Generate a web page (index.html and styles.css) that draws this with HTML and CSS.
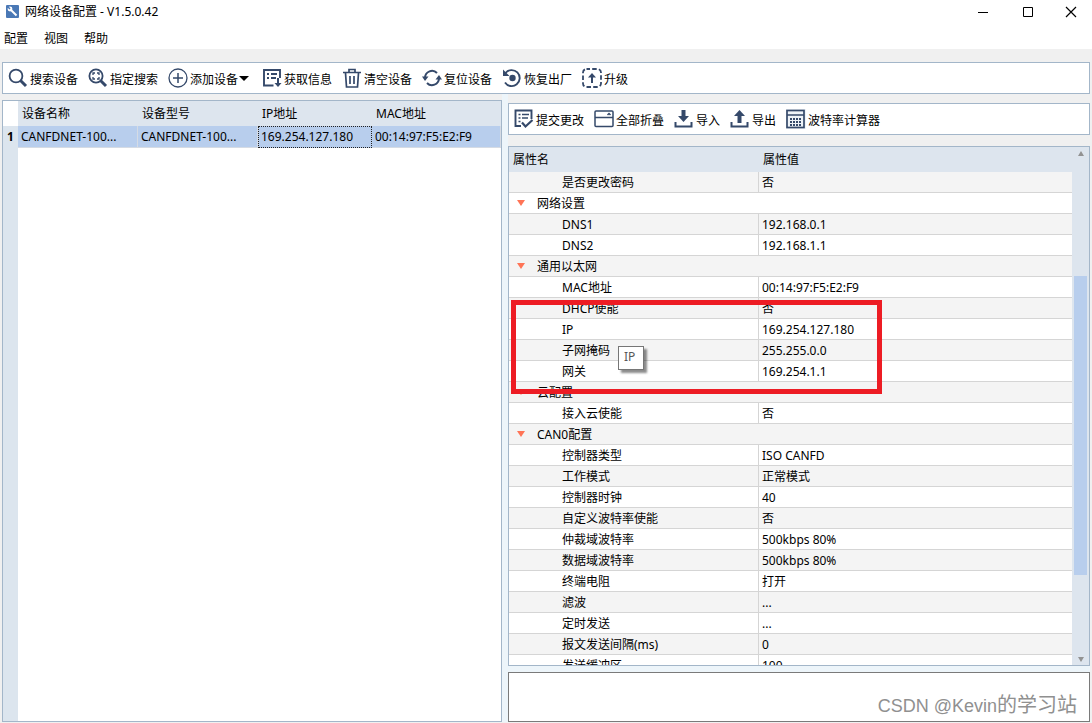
FILE: index.html
```html
<!DOCTYPE html>
<html lang="zh-CN">
<head>
<meta charset="utf-8">
<title>网络设备配置 - V1.5.0.42</title>
<link rel="stylesheet" href="styles.css">
</head>
<body>
<div class="window">
  <header class="titlebar">
    <svg class="app-icon" viewBox="0 0 13 13"><rect width="13" height="13" rx="1" fill="#4a78b5"/><path d="M5 5l5.500 5.500" stroke="#fff" stroke-width="2"/><circle cx="4" cy="4" r="2.400" fill="#fff"/><path d="M1 1l3 3" stroke="#4a78b5" stroke-width="1.600"/></svg>
    <h1 class="title">网络设备配置 - V1.5.0.42</h1>
    <div class="window-controls">
      <button type="button" aria-label="最小化"><svg viewBox="0 0 12 12"><path d="M1 6.500h10" stroke="#000"/></svg></button>
      <button type="button" aria-label="最大化"><svg viewBox="0 0 12 12"><path d="M1.500 1.500h9v9h-9z" fill="none" stroke="#000"/></svg></button>
      <button type="button" aria-label="关闭"><svg viewBox="0 0 12 12"><path d="M1 1l10 10M11 1L1 11" stroke="#000" stroke-width="1.200"/></svg></button>
    </div>
  </header>
  <nav class="menubar">
    <button type="button">配置</button>
    <button type="button">视图</button>
    <button type="button">帮助</button>
  </nav>

  <div class="toolbar main-toolbar">
    <button type="button"><svg class="icon" viewBox="0 0 20 20"><circle cx="8" cy="8" r="6.400" stroke-width="1.800"/><path d="M12.500 12.500l5.500 5.500" stroke-width="3"/></svg><span>搜索设备</span></button>
    <button type="button"><svg class="icon" viewBox="0 0 20 20"><circle cx="8" cy="8" r="6.600" stroke-width="1.800"/><path d="M12.500 12.500l5.500 5.500" stroke-width="3"/><path d="M5 7V5h2M9 5h2v2M11 9v2H9M7 11H5V9" stroke-width="1.300"/></svg><span>指定搜索</span></button>
    <button type="button"><svg class="icon" viewBox="0 0 20 20"><circle cx="10" cy="10" r="9" stroke-width="1.300"/><path d="M10 5v10M5 10h10" stroke-width="1.500"/></svg><span>添加设备</span><svg class="caret" viewBox="0 0 14 10"><path d="M1 3h10L6 8z" fill="#000"/></svg></button>
    <button type="button"><svg class="icon" viewBox="0 0 20 20"><path d="M11.500 17.500H2V2h16v8" stroke-width="1.900"/><path d="M5 6h2M9 6h6M5 10h2M9 10h5" stroke-width="1.800"/><path d="M16 10v7" stroke-width="2"/><path class="solid" d="M12.500 15h7L16 19z"/></svg><span>获取信息</span></button>
    <button type="button"><svg class="icon" viewBox="0 0 20 20"><path d="M1 4.500h18M7 4V1.500h6V4" stroke-width="1.700"/><path d="M3.500 5l1 14h11l1-14M8 8v8M12 8v8" stroke-width="1.700"/></svg><span>清空设备</span></button>
    <button type="button"><svg class="icon" viewBox="0 0 20 20"><path d="M3 9.500a7 7 0 0 1 12-4.500M17 10.500a7 7 0 0 1-12 4.500" stroke-width="2"/><path class="solid" d="M0 8.500h6.500L3 13zM13.500 11.500H20L17 7z"/></svg><span>复位设备</span></button>
    <button type="button"><svg class="icon" viewBox="0 0 20 20"><path d="M3.500 5a8 8 0 1 1-.5 9.500" stroke-width="1.900"/><circle class="solid" cx="10.500" cy="10" r="3.200"/><path class="solid" d="M1 1.500V8h6.500z"/></svg><span>恢复出厂</span></button>
    <button type="button"><svg class="icon" viewBox="0 0 20 20"><rect class="ink" x="1" y="1" width="18" height="18" rx="3.500" stroke-width="1.800" stroke-dasharray="4.500 2.200" stroke-dashoffset="1"/><path d="M10 8v7" stroke-width="2"/><path class="solid" d="M6 9.500L10 5l4 4.500z"/></svg><span>升级</span></button>
  </div>

  <main class="workspace">
    <section class="devices">
      <table class="device-table">
        <colgroup><col class="c-index"><col class="c-name"><col class="c-model"><col class="c-ip"><col class="c-mac"></colgroup>
        <thead><tr><td></td><th>设备名称</th><th>设备型号</th><th>IP地址</th><th>MAC地址</th></tr></thead>
        <tbody>
          <tr><th>1</th><td>CANFDNET-100...</td><td>CANFDNET-100...</td><td class="current">169.254.127.180</td><td>00:14:97:F5:E2:F9</td></tr>
        </tbody>
      </table>
    </section>

    <section class="details">
      <div class="toolbar-area">
        <div class="toolbar">
          <button type="button"><svg class="icon" viewBox="0 0 20 20"><path d="M7 17H1.500V1.500h16V10" stroke-width="1.900"/><path d="M4.500 5.500h2M8 5.500h7M4.500 9h2M8 9h6M4.500 12.500h2" stroke-width="1.600"/><path d="M8 13.500l3.500 4L18.500 11" stroke-width="2.200"/></svg><span>提交更改</span></button>
          <button type="button"><svg class="icon" viewBox="0 0 20 20"><rect class="ink" x="1" y="2" width="18" height="15.500" rx="1" stroke-width="1.500"/><path d="M1 8.500h18M13.500 6l1.500-1.500L16.500 6" stroke-width="1.500"/></svg><span>全部折叠</span></button>
          <button type="button"><svg class="icon" viewBox="0 0 20 20"><path d="M1.500 13v4.500h16V13" stroke-width="2"/><path d="M9.500 1v7" stroke-width="4"/><path class="solid" d="M4 7h11l-5.500 6z"/></svg><span>导入</span></button>
          <button type="button"><svg class="icon" viewBox="0 0 20 20"><path d="M1.500 13v4.500h16V13" stroke-width="2"/><path d="M9.500 6v8" stroke-width="4"/><path class="solid" d="M4 7h11L9.500 1z"/></svg><span>导出</span></button>
          <button type="button"><svg class="icon tinted" viewBox="0 0 20 20"><rect class="ink" x="1" y="1.500" width="17" height="17" stroke-width="1.700"/><path d="M1 6h17" stroke-width="1.500"/><path d="M4 10h11M4 13h11M4 16h11" stroke-width="2" stroke-dasharray="2 1"/></svg><span>波特率计算器</span></button>
        </div>
      </div>

      <div class="properties">
        <div class="property-view">
          <table class="property-table">
            <colgroup><col class="c-prop"><col></colgroup>
            <thead><tr><th>属性名</th><th>属性值</th></tr></thead>
            <tbody>
              <tr><td>是否更改密码</td><td>否</td></tr>
              <tr class="group"><th colspan="2"><button type="button"><svg viewBox="0 0 8 6"><path d="M0 0h8L4 6z"/></svg>网络设置</button></th></tr>
              <tr><td>DNS1</td><td>192.168.0.1</td></tr>
              <tr><td>DNS2</td><td>192.168.1.1</td></tr>
              <tr class="group"><th colspan="2"><button type="button"><svg viewBox="0 0 8 6"><path d="M0 0h8L4 6z"/></svg>通用以太网</button></th></tr>
              <tr><td>MAC地址</td><td>00:14:97:F5:E2:F9</td></tr>
              <tr><td>DHCP使能</td><td>否</td></tr>
              <tr><td>IP</td><td>169.254.127.180</td></tr>
              <tr><td>子网掩码</td><td>255.255.0.0</td></tr>
              <tr><td>网关</td><td>169.254.1.1</td></tr>
              <tr class="group"><th colspan="2"><button type="button"><svg viewBox="0 0 8 6"><path d="M0 0h8L4 6z"/></svg>云配置</button></th></tr>
              <tr><td>接入云使能</td><td>否</td></tr>
              <tr class="group"><th colspan="2"><button type="button"><svg viewBox="0 0 8 6"><path d="M0 0h8L4 6z"/></svg>CAN0配置</button></th></tr>
              <tr><td>控制器类型</td><td>ISO CANFD</td></tr>
              <tr><td>工作模式</td><td>正常模式</td></tr>
              <tr><td>控制器时钟</td><td>40</td></tr>
              <tr><td>自定义波特率使能</td><td>否</td></tr>
              <tr><td>仲裁域波特率</td><td>500kbps 80%</td></tr>
              <tr><td>数据域波特率</td><td>500kbps 80%</td></tr>
              <tr><td>终端电阻</td><td>打开</td></tr>
              <tr><td>滤波</td><td>...</td></tr>
              <tr><td>定时发送</td><td>...</td></tr>
              <tr><td>报文发送间隔(ms)</td><td>0</td></tr>
              <tr><td>发送缓冲区</td><td>100</td></tr>
            </tbody>
          </table>
        </div>
        <div class="scrollbar">
          <svg viewBox="0 0 6 5"><path d="M0 5h6L3 0z"/></svg>
          <div class="track"><div class="thumb"></div></div>
          <svg viewBox="0 0 6 5"><path d="M0 0h6L3 5z"/></svg>
        </div>
        <div class="tooltip" role="tooltip">IP</div>
        <div class="highlight"></div>
      </div>

      <textarea class="output" aria-label="说明" readonly></textarea>
    </section>
  </main>
  <div class="watermark">CSDN @Kevin<span>的学习站</span></div>
</div>
</body>
</html>
```
FILE: styles.css
```css
* { box-sizing: border-box; }

body {
  margin: 0;
  background: #f0f0f0;
  color: #000;
  font: 12px/20px "Noto Sans", "Noto Sans CJK SC", sans-serif;
}

button {
  padding: 0;
  border: 0;
  background: none;
  color: inherit;
  font: inherit;
}

.window {
  position: relative;
  display: flex;
  flex-direction: column;
  height: 100vh;
  min-height: 480px;
  overflow: hidden;
}

/* Title and menu */
.titlebar {
  display: flex;
  align-items: center;
  height: 24px;
  padding-left: 6px;
  background: #fff;
}
.app-icon { width: 13px; height: 13px; margin: 0 6px 2px 0; }
.title { margin: 0; font-size: 12px; font-weight: 400; }
.window-controls { display: flex; margin-left: auto; }
.window-controls button {
  display: flex;
  align-items: center;
  justify-content: center;
  width: 45px;
  height: 22px;
}
.window-controls button:last-child { width: 42px; }

.window-controls svg { width: 12px; height: 12px; }

.menubar {
  display: flex;
  align-items: center;
  gap: 16px;
  height: 25px;
  padding: 4px 4px 0;
  background: #fff;
}

/* Toolbars */
.toolbar {
  display: flex;
  align-items: center;
  gap: 10px;
  height: 32px;
  padding: 0 5px;
  border: 1px solid #a3b6c9;
  background: #fff;
  white-space: nowrap;
}
.toolbar button { display: flex; align-items: center; }
.toolbar span { padding-top: 3px; }
.main-toolbar { flex: none; margin: 13px 2px 0; }
.icon {
  width: 20px;
  height: 20px;
  margin-right: 2px;
  fill: none;
}
.icon path,
.icon circle,
.icon .ink { stroke: #35496a; }
.icon .solid { fill: #35496a; stroke: none; }
.tinted { background: #eef3f8; }
.caret { width: 14px; height: 10px; }

/* Workspace */
.workspace {
  display: grid;
  grid-template-columns: 500fr 582fr;
  gap: 6px;
  flex: 1;
  min-height: 0;
  margin: 0 2px 1px;
  background: #edf5fa;
}

table { width: 100%; border-spacing: 0; table-layout: fixed; }
th { font-weight: 400; text-align: left; }
th, td { overflow: hidden; padding: 0; white-space: nowrap; }

.devices {
  margin-top: 6px;
  border: 1px solid #a3b6c9;
  background: linear-gradient(90deg, #dce5ee 15px, #fff 15px);
  box-shadow: 0 -6px #f0f0f0;
}
.c-index { width: 15px; }
.c-name { width: 120px; }
.c-model { width: 120px; }
.c-ip { width: 114px; }
.device-table thead td { background: #fff; }
.device-table thead th { height: 25px; padding-left: 4px; background: #dde5ee; }
.device-table tbody td {
  height: 22px;
  padding: 0 0 0 3px;
  border-right: 1px solid #d5dbe4;
  border-bottom: 1px solid #d5dbe4;
  background: #b8ceed;
}
.device-table tbody th { font-weight: 700; text-align: center; }
.device-table td.current { padding-left: 2px; border: 1px dotted #222; }

.details { display: flex; flex-direction: column; min-width: 0; min-height: 0; }
.toolbar-area { padding: 9px 0 11px; background: #f0f0f0; }

.properties {
  position: relative;
  display: flex;
  flex: 1;
  min-height: 0;
  border: 1px solid #a3b6c9;
  background: #dde5ee;
}
.property-view { flex: 1; min-width: 0; overflow: hidden; }
.c-prop { width: 250px; }
.property-table thead th { height: 25px; padding-left: 4px; background: #dde5ee; }
.property-table tbody tr { background: #fff; }
.property-table tbody tr:nth-child(odd) { background: #f4f4f4; }
.property-table tbody td,
.property-table tbody th {
  height: 21px;
  padding-top: 2px;
  border-bottom: 1px solid #d5d5d5;
  line-height: 18px;
}
.property-table tbody td:first-child { padding-left: 53px; border-right: 1px solid #d5d5d5; }
.property-table tbody td:last-child { padding-left: 3px; }
.group button { display: flex; align-items: center; padding-left: 8px; }
.group svg { width: 8px; height: 6px; margin: 0 12px 2px 0; fill: #ff7456; }

.scrollbar {
  display: flex;
  flex-direction: column;
  align-items: center;
  width: 17px;
  padding: 4px 0 3px;
}
.scrollbar svg { width: 6px; height: 5px; fill: #929292; }
.track { display: grid; flex: 1; grid-template-rows: 120fr 299fr 82fr; width: 13px; }
.thumb { grid-row: 2; background: #b8ceed; }

.tooltip {
  position: absolute;
  left: 109px;
  top: 199px;
  padding: 0 8px 2px 5px;
  border: 1px solid #767676;
  background: #fff;
  color: #575757;
  box-shadow: 3px 3px 2px rgba(0, 0, 0, .45);
}
.highlight {
  position: absolute;
  left: 2px;
  top: 153px;
  width: 371px;
  height: 94px;
  border: 5px solid #ed1c24;
}

.output {
  display: block;
  flex: none;
  width: 100%;
  height: 50px;
  margin-top: 6px;
  border: 1px solid #7a7a7a;
  border-radius: 0;
  background: #fff;
  resize: none;
  outline: 0;
}

.watermark {
  position: absolute;
  right: 15px;
  bottom: 5px;
  color: #909090;
  font: 18px/24px "Liberation Sans", "Noto Sans CJK SC", sans-serif;
}
.watermark span { font-size: 20px; }
```
